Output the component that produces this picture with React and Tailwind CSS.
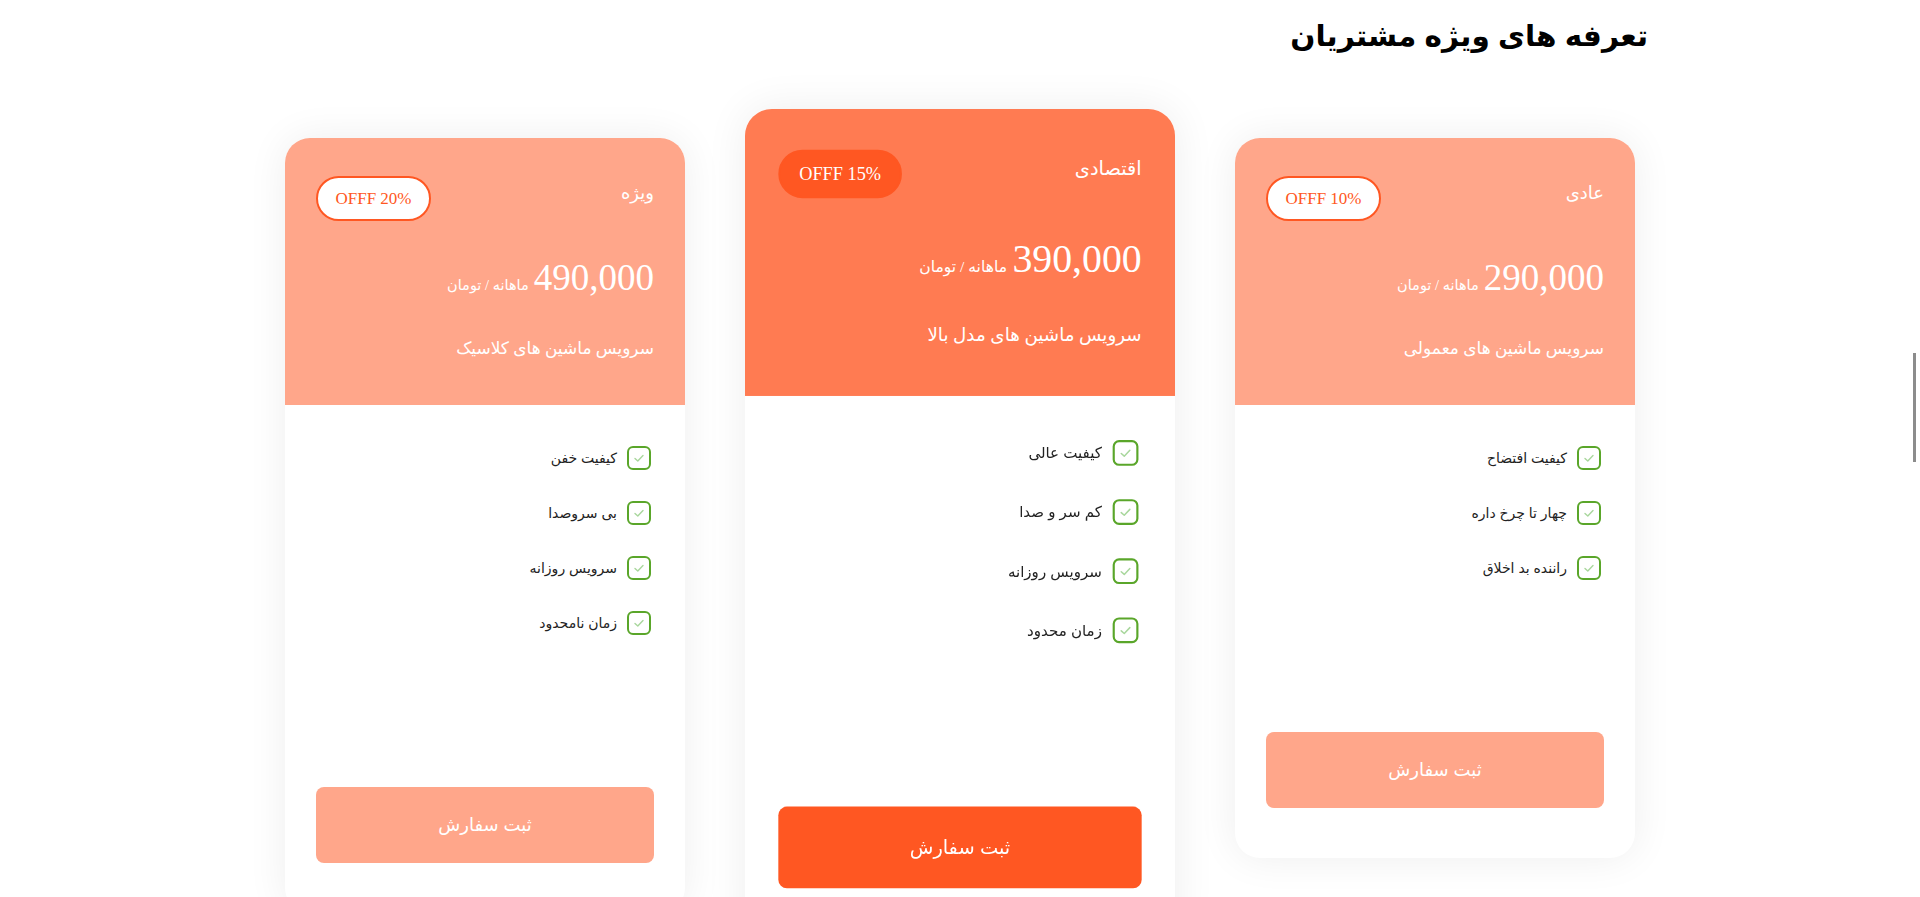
import React from "react";

const plans = [
  {
    title: "عادی",
    off: "OFFF 10%",
    price: "290,000",
    desc: "سرویس ماشین های معمولی",
    features: ["کیفیت افتضاح", "چهار تا چرخ داره", "راننده بد اخلاق"],
    featured: false,
  },
  {
    title: "اقتصادی",
    off: "OFFF 15%",
    price: "390,000",
    desc: "سرویس ماشین های مدل بالا",
    features: ["کیفیت عالی", "کم سر و صدا", "سرویس روزانه", "زمان محدود"],
    featured: true,
  },
  {
    title: "ویژه",
    off: "OFFF 20%",
    price: "490,000",
    desc: "سرویس ماشین های کلاسیک",
    features: ["کیفیت خفن", "بی سروصدا", "سرویس روزانه", "زمان نامحدود"],
    featured: false,
  },
];

// ==========================
// Check box icon
// ==========================

function CheckBox() {
  return (
    <span className="flex h-[24px] w-[24px] shrink-0 items-center justify-center rounded-[6px] border-2 border-[#5aa62a]">
      <svg width="12" height="12" viewBox="0 0 12 12" fill="none">
        <polyline
          points="2,6.5 4.8,9 10,3.5"
          stroke="#a9d79d"
          strokeWidth="1.4"
          strokeLinecap="round"
          strokeLinejoin="round"
        />
      </svg>
    </span>
  );
}

// ==========================
// Plan card
// ==========================

function PlanCard({ plan }) {
  const featured = plan.featured;

  return (
    <div
      className={`w-[400px] shrink-0 overflow-hidden rounded-[25px] bg-white shadow-[0_0_40px_rgba(0,0,0,0.07)] ${
        featured ? "scale-[1.075]" : ""
      }`}
    >
      <div
        className={`px-[31px] pt-[38px] pb-[42px] text-white ${
          featured ? "bg-[#ff7b52]" : "bg-[#ffa68a]"
        }`}
        style={{ fontFamily: '"Liberation Serif", "DejaVu Sans", serif' }}
      >
        <div className="flex items-start justify-between">
          <div className="text-[18px] leading-[34px]">{plan.title}</div>
          <div
            dir="ltr"
            className={`flex h-[45px] w-[115px] items-center justify-center rounded-full border-2 border-[#ff5722] text-[17px] ${
              featured ? "bg-[#ff5722] text-white" : "bg-white text-[#ff5722]"
            }`}
          >
            {plan.off}
          </div>
        </div>

        <div className="mt-[38px] flex items-baseline gap-[5px]">
          <span className="text-[37px] leading-none">{plan.price}</span>
          <span className="text-[14.5px] leading-none">ماهانه / تومان</span>
        </div>

        <div className="mt-[39px] text-[17px] leading-[28px]">{plan.desc}</div>
      </div>

      <div
        className="px-[31px] pt-[41px] pb-[50px]"
        style={{ fontFamily: '"Liberation Sans", "DejaVu Sans", sans-serif' }}
      >
        <ul className="flex flex-col gap-[31px] pr-[3px]">
          {plan.features.map((f) => (
            <li key={f} className="flex items-center gap-[10px]">
              <CheckBox />
              <span className="text-[14px] text-[#222]">{f}</span>
            </li>
          ))}
        </ul>

        <button
          className={`mt-[152px] flex h-[76px] w-full items-center justify-center rounded-[8px] text-[18px] text-white ${
            featured ? "bg-[#ff5722]" : "bg-[#ffa68a]"
          }`}
        >
          ثبت سفارش
        </button>
      </div>
    </div>
  );
}

export default function App() {
  return (
    <div dir="rtl" className="min-h-screen bg-white">
      <div className="mx-auto w-[1376px] pt-[10px]">
        <h1
          className="text-[29.5px] font-bold leading-[52px] text-black"
          style={{ fontFamily: '"Liberation Sans", "DejaVu Sans", sans-serif' }}
        >
          تعرفه های ویژه مشتریان
        </h1>

        <div className="mt-[76px] flex items-start justify-center gap-[75px]">
          {plans.map((p) => (
            <PlanCard key={p.title} plan={p} />
          ))}
        </div>
      </div>

      {/* scrollbar thumb */}
      <div className="fixed right-[4px] top-[353px] h-[109px] w-[3px] bg-[#8c8c8c]" />
    </div>
  );
}
